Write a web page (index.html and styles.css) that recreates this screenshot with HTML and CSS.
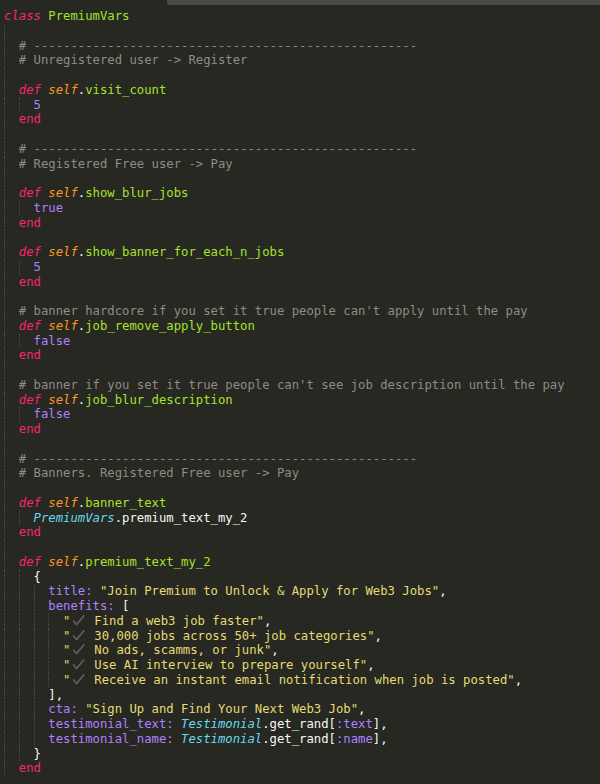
FILE: index.html
```html
<!DOCTYPE html>
<html>
<head>
<meta charset="utf-8">
<link rel="stylesheet" href="styles.css">
</head>
<body>
<div class="tabbar"><div class="tab"></div></div>
<div class="code">
<div class="ln"><span class="kw it">class</span> <span class="cn">PremiumVars</span></div>
<div class="ln"><i class="g"></i></div>
<div class="ln"><i class="g"></i><span class="cm"># ----------------------------------------------------</span></div>
<div class="ln"><i class="g"></i><span class="cm"># Unregistered user -&gt; Register</span></div>
<div class="ln"><i class="g"></i></div>
<div class="ln"><i class="g"></i><span class="kw it">def</span> <span class="sf">self</span>.<span class="fn">visit_count</span></div>
<div class="ln"><i class="g"></i><i class="g"></i><span class="num">5</span></div>
<div class="ln"><i class="g"></i><span class="kw">end</span></div>
<div class="ln"><i class="g"></i></div>
<div class="ln"><i class="g"></i><span class="cm"># ----------------------------------------------------</span></div>
<div class="ln"><i class="g"></i><span class="cm"># Registered Free user -&gt; Pay</span></div>
<div class="ln"><i class="g"></i></div>
<div class="ln"><i class="g"></i><span class="kw it">def</span> <span class="sf">self</span>.<span class="fn">show_blur_jobs</span></div>
<div class="ln"><i class="g"></i><i class="g"></i><span class="num">true</span></div>
<div class="ln"><i class="g"></i><span class="kw">end</span></div>
<div class="ln"><i class="g"></i></div>
<div class="ln"><i class="g"></i><span class="kw it">def</span> <span class="sf">self</span>.<span class="fn">show_banner_for_each_n_jobs</span></div>
<div class="ln"><i class="g"></i><i class="g"></i><span class="num">5</span></div>
<div class="ln"><i class="g"></i><span class="kw">end</span></div>
<div class="ln"><i class="g"></i></div>
<div class="ln"><i class="g"></i><span class="cm"># banner hardcore if you set it true people can't apply until the pay</span></div>
<div class="ln"><i class="g"></i><span class="kw it">def</span> <span class="sf">self</span>.<span class="fn">job_remove_apply_button</span></div>
<div class="ln"><i class="g"></i><i class="g"></i><span class="num">false</span></div>
<div class="ln"><i class="g"></i><span class="kw">end</span></div>
<div class="ln"><i class="g"></i></div>
<div class="ln"><i class="g"></i><span class="cm"># banner if you set it true people can't see job description until the pay</span></div>
<div class="ln"><i class="g"></i><span class="kw it">def</span> <span class="sf">self</span>.<span class="fn">job_blur_description</span></div>
<div class="ln"><i class="g"></i><i class="g"></i><span class="num">false</span></div>
<div class="ln"><i class="g"></i><span class="kw">end</span></div>
<div class="ln"><i class="g"></i></div>
<div class="ln"><i class="g"></i><span class="cm"># ----------------------------------------------------</span></div>
<div class="ln"><i class="g"></i><span class="cm"># Banners. Registered Free user -&gt; Pay</span></div>
<div class="ln"><i class="g"></i></div>
<div class="ln"><i class="g"></i><span class="kw it">def</span> <span class="sf">self</span>.<span class="fn">banner_text</span></div>
<div class="ln"><i class="g"></i><i class="g"></i><span class="cls">PremiumVars</span>.premium_text_my_2</div>
<div class="ln"><i class="g"></i><span class="kw">end</span></div>
<div class="ln"><i class="g"></i></div>
<div class="ln"><i class="g"></i><span class="kw it">def</span> <span class="sf">self</span>.<span class="fn">premium_text_my_2</span></div>
<div class="ln"><i class="g"></i><i class="g"></i>{</div>
<div class="ln"><i class="g"></i><i class="g"></i><i class="g"></i><span class="sym">title:</span> <span class="str">"Join Premium to Unlock &amp; Apply for Web3 Jobs"</span>,</div>
<div class="ln"><i class="g"></i><i class="g"></i><i class="g"></i><span class="sym">benefits:</span> [</div>
<div class="ln"><i class="g"></i><i class="g"></i><i class="g"></i><i class="g"></i><span class="str">"<svg class="ck" viewBox="0 0 16 12"><polyline points="3,6.5 6,10.5 14,1"/></svg> Find a web3 job faster"</span>,</div>
<div class="ln"><i class="g"></i><i class="g"></i><i class="g"></i><i class="g"></i><span class="str">"<svg class="ck" viewBox="0 0 16 12"><polyline points="3,6.5 6,10.5 14,1"/></svg> 30,000 jobs across 50+ job categories"</span>,</div>
<div class="ln"><i class="g"></i><i class="g"></i><i class="g"></i><i class="g"></i><span class="str">"<svg class="ck" viewBox="0 0 16 12"><polyline points="3,6.5 6,10.5 14,1"/></svg> No ads, scamms, or junk"</span>,</div>
<div class="ln"><i class="g"></i><i class="g"></i><i class="g"></i><i class="g"></i><span class="str">"<svg class="ck" viewBox="0 0 16 12"><polyline points="3,6.5 6,10.5 14,1"/></svg> Use AI interview to prepare yourself"</span>,</div>
<div class="ln"><i class="g"></i><i class="g"></i><i class="g"></i><i class="g"></i><span class="str">"<svg class="ck" viewBox="0 0 16 12"><polyline points="3,6.5 6,10.5 14,1"/></svg> Receive an instant email notification when job is posted"</span>,</div>
<div class="ln"><i class="g"></i><i class="g"></i><i class="g"></i>],</div>
<div class="ln"><i class="g"></i><i class="g"></i><i class="g"></i><span class="sym">cta:</span> <span class="str">"Sign Up and Find Your Next Web3 Job"</span>,</div>
<div class="ln"><i class="g"></i><i class="g"></i><i class="g"></i><span class="sym">testimonial_text:</span> <span class="cls">Testimonial</span>.get_rand[<span class="sym">:text</span>],</div>
<div class="ln"><i class="g"></i><i class="g"></i><i class="g"></i><span class="sym">testimonial_name:</span> <span class="cls">Testimonial</span>.get_rand[<span class="sym">:name</span>],</div>
<div class="ln"><i class="g"></i><i class="g"></i>}</div>
<div class="ln"><i class="g"></i><span class="kw">end</span></div>
</div>
</body>
</html>
```
FILE: styles.css
```css
html, body {
  margin: 0;
  padding: 0;
  background: #272822;
  height: 100%;
  overflow: hidden;
}
.tabbar {
  height: 5px;
  display: flex;
  justify-content: flex-end;
}
.tab {
  width: 433px;
  height: 5px;
  background: #4a4a48;
  border-bottom-left-radius: 3px;
}
.code {
  padding: 4px 0 0 4px;
  font-family: "DejaVu Sans Mono", monospace;
  font-size: 12.25px;
  line-height: 14.76px;
  color: #f8f8f2;
}
.ln {
  height: 14.76px;
  white-space: pre;
}
.g {
  display: inline-block;
  width: 2ch;
  height: 14.76px;
  vertical-align: top;
  border-left: 1px dotted #4d4e46;
  box-sizing: border-box;
}
.kw { color: #f92672; }
.it { font-style: italic; }
.cn { color: #a6e22e; }
.cls { color: #66d9ef; font-style: italic; }
.sf { color: #fd971f; font-style: italic; }
.fn { color: #a6e22e; }
.num { color: #ae81ff; }
.cm { color: #8e8c84; }
.str { color: #e6db74; }
.sym { color: #ae81ff; }
.ck {
  display: inline-block;
  width: 16.5px;
  height: 11px;
  vertical-align: -1px;
  fill: none;
  stroke: #60615a;
  stroke-width: 1.8;
  stroke-linecap: round;
  stroke-linejoin: round;
}
```
